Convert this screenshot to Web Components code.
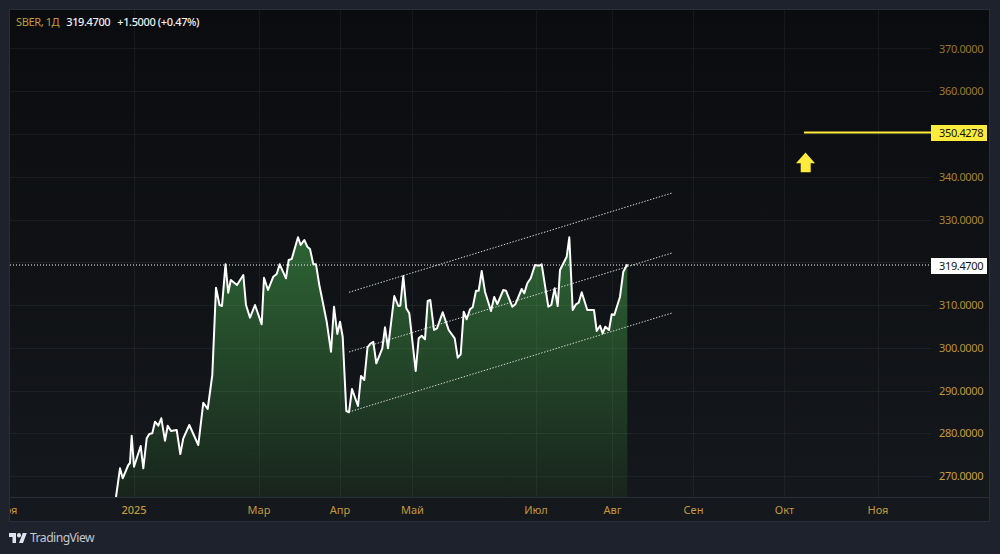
<!DOCTYPE html>
<html lang="ru">
<head>
<meta charset="utf-8">
<title>SBER</title>
<style>
  html, body { margin: 0; height: 100%; background: #1e222d; }
</style>
</head>
<body>
<chart-page>
  <chart-frame>
    <chart-legend slot="legend" symbol="SBER, 1Д" last="319.4700" change="+1.5000 (+0.47%)"></chart-legend>
    <price-plot slot="plot"></price-plot>
    <price-axis slot="prices"></price-axis>
    <time-axis slot="times"></time-axis>
  </chart-frame>
  <tv-attribution></tv-attribution>
</chart-page>

<script>
// price -> y in page pixels
const priceY = p => 476 - (p - 270) * 4.275;
const FONT = '"Noto Sans", "Open Sans", sans-serif';

class ChartPage extends HTMLElement {
    constructor() {
        super();
        this.attachShadow({ mode: "open" });
        this.shadowRoot.innerHTML = `
    <style>
      :host {
        display: flex;
        flex-direction: column;
        width: 1000px;
        height: 554px;
        box-sizing: border-box;
        padding: 9px 10px 0 9px;
        background: #1e222d;
        overflow: hidden;
      }
    </style>
    <slot></slot>`;
    }
}
customElements.define("chart-page", ChartPage);

class ChartFrame extends HTMLElement {
    constructor() {
        super();
        this.attachShadow({ mode: "open" });
        this.shadowRoot.innerHTML = `
    <style>
      :host {
        display: grid;
        position: relative;
        grid-template-columns: 921px 58px;
        grid-template-rows: 487px 24px;
        border: 1px solid #2a2e39;
        background: linear-gradient(180deg, #0a0c0f 0%, #15181c 100%);
      }
      .legend { position: absolute; left: 6px; top: 5px; z-index: 2; }
      .times { grid-column: 1 / 3; }
    </style>
    <div class="legend"><slot name="legend"></slot></div>
    <slot name="plot"></slot>
    <slot name="prices"></slot>
    <div class="times"><slot name="times"></slot></div>`;
    }
}
customElements.define("chart-frame", ChartFrame);

class ChartLegend extends HTMLElement {
    constructor() {
        super();
        this.attachShadow({ mode: "open" });
    }
    connectedCallback() {
        this.shadowRoot.innerHTML = `
    <style>
      :host {
        display: flex;
        gap: 7px;
        font: 500 11px/14px ${FONT};
        letter-spacing: -.38px;
        color: #f0f0f0;
        white-space: nowrap;
      }
      .sym { color: #c29a3a; font-weight: 400; }
    </style>
    <span class="sym">${this.getAttribute("symbol")}</span>
    <span>${this.getAttribute("last")}</span>
    <span>${this.getAttribute("change")}</span>`;
    }
}
customElements.define("chart-legend", ChartLegend);

class PricePlot extends HTMLElement {
    constructor() {
        super();
        this.attachShadow({ mode: "open" });
    }
    connectedCallback() {
        const line = [
            [116,497],[120,468.3],[122.7,478.3],[128.3,465],[130,463],[131.7,435.7],[134,466.7],[140.7,446],[143.3,468.3],
            [146.7,438.3],[149.3,434],[152.3,433.3],[155,421.7],[158.3,425.7],[161.3,418.3],[165,440.7],[167.7,425.7],
            [171,431],[176.7,430],[180.3,454],[183.3,438.3],[189.3,425],[198.3,445],[203.3,402.7],[207.7,409],[212.3,375],
            [216,287.7],[219.5,305],[222,306],[225.5,264.3],[228.2,292.7],[230.8,280],[237,285],[243.3,275],[246,305],
            [250,317.7],[255,305],[261.7,324.3],[264,277.7],[268,290],[273.3,276.7],[276.7,274],[279.7,264.3],[286,278.3],
            [288.7,260],[291.7,259],[298,237.3],[300.7,245],[304.3,240],[307.3,246.7],[310,249],[313.3,264.3],[316,264.3],
            [319.3,285],[321.7,296.7],[326.7,321.7],[331,351.7],[334,306.7],[337.3,334],[340,321.7],[342.7,336.7],
            [346.3,411],[349,412.3],[352,389],[358,406],[361,376],[364.3,380],[367.5,347.5],[370,344],[373.3,341.7],
            [376.3,363.3],[382.3,348.3],[385,327.3],[388,348.3],[394.3,296],[398.3,306],[400.3,305.7],[403.3,276],
            [406.3,308.3],[409.3,313.3],[415.7,371],[418.7,338.3],[421.7,335.7],[425,339.3],[427.7,301],[430.3,300],
            [434,330],[437,328.3],[442.7,312.3],[448.7,330],[454.7,338.3],[457.7,357.7],[460.7,354.3],[463.7,311.7],
            [466.7,319.3],[470,309.3],[472.7,307.3],[476,290.7],[478.7,290.7],[481.7,271],[485,291.7],[491,311],
            [494.2,297],[497.3,304.2],[503.3,290],[506,290.7],[512.3,306.7],[515.3,304.3],[521.7,289],[524.3,293.3],
            [527.3,283.3],[530.7,278.3],[535,265],[539.3,265.7],[541.7,264.3],[548.3,306.7],[551.3,305],[554.7,288.3],
            [557.7,306],[560,270],[566.7,256.7],[569.3,237.3],[572.7,310],[576,304.3],[578.7,302.7],[581.7,292.3],
            [587.3,310],[594,310],[596.7,331],[600,325.7],[602.7,333.3],[605.3,326.7],[609,330],[611.7,314.3],[614.3,315],
            [620,296.7],[623.3,271.7],[627.3,264.3]
        ].map(p => p.join(",")).join(" ");

        const hGrid = [370, 360, 350, 340, 330, 320, 310, 300, 290, 280, 270]
            .map(p => `<line x1="10" x2="931" y1="${Math.round(priceY(p)) + .5}" y2="${Math.round(priceY(p)) + .5}"/>`).join("");
        const vGrid = [134, 259, 340, 412, 536, 612, 693, 784, 878]
            .map(x => `<line y1="10" y2="497" x1="${x + .5}" x2="${x + .5}"/>`).join("");
        const channels = [[292.3, 193], [352, 253], [412, 313]]
            .map(([a, b]) => `<line x1="349" y1="${a}" x2="672" y2="${b}"/>`).join("");

        this.shadowRoot.innerHTML = `
    <style>
      :host { display: block; width: 921px; height: 487px; }
      svg { display: block; }
    </style>
    <svg width="921" height="487" viewBox="10 10 921 487">
      <defs>
        <linearGradient id="fill" gradientUnits="userSpaceOnUse" x1="0" y1="237" x2="0" y2="497">
          <stop offset="0" stop-color="#2d6434"/>
          <stop offset="1" stop-color="#18241c"/>
        </linearGradient>
      </defs>
      <polygon points="116,497 ${line} 627.3,497" fill="url(#fill)"/>
      <g stroke="#ffffff" stroke-opacity=".05" stroke-width="1">${hGrid}${vGrid}</g>
      <line x1="10" x2="931" y1="265" y2="265" stroke="#fff" stroke-width="1" stroke-dasharray="1 2"/>
      <g stroke="#d8dcd8" stroke-width="1" stroke-dasharray="1.4 1.6">${channels}</g>
      <polyline points="${line}" fill="none" stroke="#fff" stroke-width="2" stroke-linejoin="round"/>
      <line x1="804" x2="931" y1="132.5" y2="132.5" stroke="#ffeb3b" stroke-width="2"/>
      <path d="M805.5 152.5 L815 163.3 L810.7 163.3 L810.7 172.3 L800.7 172.3 L800.7 163.3 L796 163.3 Z" fill="#ffeb3b"/>
    </svg>`;
    }
}
customElements.define("price-plot", PricePlot);

class PriceAxis extends HTMLElement {
    constructor() {
        super();
        this.attachShadow({ mode: "open" });
    }
    connectedCallback() {
        const ticks = [370, 360, 350, 340, 330, 320, 310, 300, 290, 280, 270];
        const rows = ticks.map((p, i) => {
            // the labels are dimmer towards the top of the axis
            const t = i / (ticks.length - 1);
            const c = `rgb(${Math.round(150 + 50 * t)},${Math.round(118 + 42 * t)},${Math.round(44 + 18 * t)})`;
            const hidden = p === 350 || p === 320 ? ' style="visibility:hidden"' : "";
            return `<div class="tick" style="color:${c}"><span${hidden}>${p}.0000</span></div>`;
        }).join("");
        this.shadowRoot.innerHTML = `
    <style>
      :host {
        display: block;
        position: relative;
        width: 58px;
        height: 487px;
        font: 400 11px/14px ${FONT};
        letter-spacing: -.35px;
      }
      .ticks { display: flex; flex-direction: column; padding-top: 17.6px; }
      .tick { height: 42.75px; line-height: 42.75px; padding-left: 8px; }
      .tag {
        position: absolute;
        left: 0;
        width: 56px;
        height: 15.5px;
        line-height: 15.5px;
        padding-left: 8px;
        box-sizing: border-box;
        color: #131313;
      }
      .now { top: 248.3px; background: #ffffff; }
      .target { top: 115px; background: #ffeb3b; }
    </style>
    <div class="ticks">${rows}</div>
    <div class="tag target">350.4278</div>
    <div class="tag now">319.4700</div>`;
    }
}
customElements.define("price-axis", PriceAxis);

class TimeAxis extends HTMLElement {
    constructor() {
        super();
        this.attachShadow({ mode: "open" });
    }
    connectedCallback() {
        const labels = [["Ноя", 7, 400], ["2025", 134, 500], ["Мар", 259, 400], ["Апр", 340, 400], ["Май", 412.5, 400],
            ["Июл", 536, 400], ["Авг", 612.5, 400], ["Сен", 693.5, 400], ["Окт", 784.5, 400], ["Ноя", 878, 400]];
        this.shadowRoot.innerHTML = `
    <style>
      :host {
        display: block;
        position: relative;
        height: 24px;
        box-sizing: border-box;
        border-top: 1px solid #2a2e39;
        overflow: hidden;
        font: 400 11px/23px ${FONT};
        color: #c29a3a;
      }
      span { position: absolute; top: 0; transform: translateX(-50%); }
    </style>
    ${labels.map(([t, x, w]) => `<span style="left:${x - 10}px;font-weight:${w}">${t}</span>`).join("")}`;
    }
}
customElements.define("time-axis", TimeAxis);

class TvAttribution extends HTMLElement {
    constructor() {
        super();
        this.attachShadow({ mode: "open" });
        this.shadowRoot.innerHTML = `
    <style>
      :host {
        display: flex;
        align-items: center;
        gap: 3px;
        padding-top: 8px;
        font: 400 12.2px/16px ${FONT};
        letter-spacing: -.55px;
        color: #c3c6ce;
      }
      svg { display: block; }
    </style>
    <svg width="18" height="10" viewBox="0 4 36 18" preserveAspectRatio="none">
      <path fill="#e0e3eb" d="M14 22H7V11H0V4h14v18zM28 22h-8l7.5-18h8L28 22z"/>
      <circle fill="#e0e3eb" cx="20" cy="8" r="4"/>
    </svg>
    <span>TradingView</span>`;
    }
}
customElements.define("tv-attribution", TvAttribution);
</script>
</body>
</html>
